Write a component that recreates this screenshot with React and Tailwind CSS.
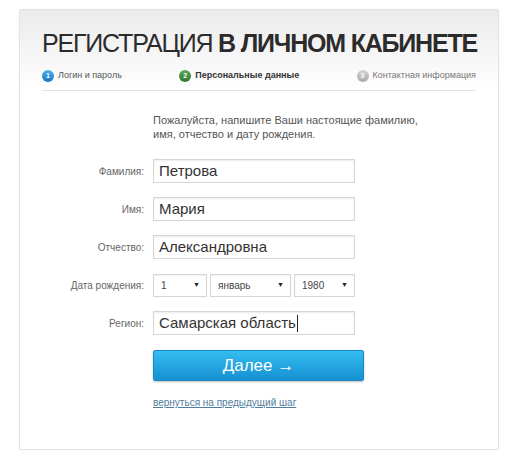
const steps = [
  { n: 1, label: 'Логин и пароль', circle: 'bg-gradient-to-b from-[#4fb0ea] to-[#1677c0]', text: 'text-[#555]' },
  { n: 2, label: 'Персональные данные', circle: 'bg-gradient-to-b from-[#5aa85a] to-[#2c7a2c]', text: 'text-[#333] font-bold' },
  { n: 3, label: 'Контактная информация', circle: 'bg-gradient-to-b from-[#d4d4d4] to-[#a9a9a9]', text: 'text-[#777]' },
];

function Field({ label, value, cursor }) {
  return (
    <>
      <div className="flex h-[24px] items-center justify-end text-[10px] text-[#666]">{label}</div>
      <div className="flex h-[24px] w-[202px] items-center border border-[#d6d6d6] bg-white px-[5px] text-[15px] text-[#333] shadow-[inset_0_1px_2px_rgba(0,0,0,0.08)]">
        {value}
        {cursor && <span className="ml-[1px] inline-block h-[17px] w-[1px] bg-[#222]" />}
      </div>
    </>
  );
}

function Select({ value, width }) {
  return (
    <div
      className={`flex h-[23px] items-center justify-between border border-[#d6d6d6] bg-white pl-[7px] pr-[6px] text-[10px] text-[#444] shadow-[inset_0_1px_2px_rgba(0,0,0,0.06)] ${width}`}
    >
      <span>{value}</span>
      <span className="text-[7px] text-[#222]">▼</span>
    </div>
  );
}

export default function App() {
  return (
    <div className="min-h-[458px] w-[513px] bg-white pl-[19px] pt-[9px] font-['Liberation_Sans',Arial,sans-serif]">
      <div className="h-[441px] w-[480px] rounded-[2px] border border-[#e2e2e2] bg-white shadow-[0_0_2px_rgba(0,0,0,0.06)]">
        <div className="bg-gradient-to-b from-[#ebebeb] to-white px-[22px] pt-[20px]">
          <h1 className="text-[25px] leading-[27px] tracking-[-1.2px] text-[#2b2b2b] whitespace-nowrap">
            РЕГИСТРАЦИЯ <span className="font-bold">В ЛИЧНОМ КАБИНЕТЕ</span>
          </h1>
          <div className="mt-[12px] flex items-center justify-between border-b border-[#e3e3e3] pb-[7px]">
            {steps.map((s) => (
              <div key={s.n} className="flex h-[14px] items-center gap-[4px]">
                <span
                  className={`flex h-[12px] w-[12px] items-center justify-center rounded-full text-[7px] font-bold text-white ${s.circle}`}
                >
                  {s.n}
                </span>
                <span className={`text-[9px] ${s.text}`}>{s.label}</span>
              </div>
            ))}
          </div>
        </div>

        <div className="pl-[23px] pt-[22px]">
          <div className="grid grid-cols-[101px_auto] gap-x-[9px]">
            <div />
            <p className="w-[270px] text-[11px] leading-[14px] text-[#555]">
              Пожалуйста, напишите Ваши настоящие фамилию, имя, отчество и дату рождения.
            </p>
          </div>

          <div className="mt-[18px] grid grid-cols-[101px_auto] gap-x-[9px] gap-y-[14px]">
            <Field label="Фамилия:" value="Петрова" />
            <Field label="Имя:" value="Мария" />
            <Field label="Отчество:" value="Александровна" />
            <div className="flex h-[24px] items-center justify-end text-[10px] text-[#666]">Дата рождения:</div>
            <div className="flex h-[24px] items-center gap-[3px]">
              <Select value="1" width="w-[54px]" />
              <Select value="январь" width="w-[81px]" />
              <Select value="1980" width="w-[61px]" />
            </div>
            <Field label="Регион:" value="Самарская область" cursor />
            <div />
            <div className="pt-[1px]">
              <button className="flex h-[31px] w-[211px] items-center justify-center rounded-[2px] border border-[#1a86c4] bg-gradient-to-b from-[#33bdf0] to-[#1690d2] text-[17px] text-white shadow-[0_1px_2px_rgba(0,0,0,0.25)]">
                Далее →
              </button>
              <a href="#" className="mt-[14px] block text-[10px] text-[#4f7e9c] underline">
                вернуться на предыдущий шаг
              </a>
            </div>
          </div>
        </div>
      </div>
    </div>
  );
}
